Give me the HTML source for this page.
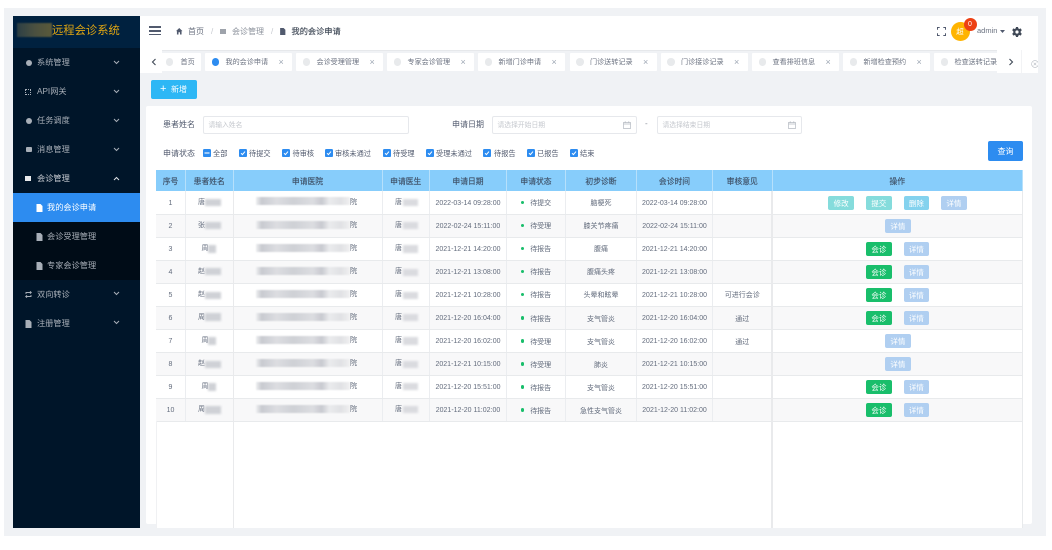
<!DOCTYPE html>
<html lang="zh-CN">
<head>
<meta charset="utf-8">
<title>远程会诊系统</title>
<style>
*{box-sizing:border-box}
html,body{margin:0;padding:0;width:1052px;height:550px;overflow:hidden;background:#fff}
body{font-family:"Liberation Sans","Noto Sans CJK SC",sans-serif;color:#515a6e;position:relative}
#wrap{position:absolute;left:0;top:0;width:1052px;height:550px;filter:blur(.35px);overflow:hidden}
.a{position:absolute;white-space:nowrap}
svg{position:absolute;display:block}
.mi{position:absolute;left:37px;font-size:8.2px;line-height:12px;color:#a8afb8;white-space:nowrap;margin-top:.7px}
.sub{left:47px}
.tab{position:absolute;top:3.3px;height:17.7px;background:#fff;border-radius:1px;width:87px}
.tab i{position:absolute;left:6.5px;top:5px;width:7.5px;height:7.5px;border-radius:50%;background:#e8eaec}
.tab span{position:absolute;left:20.5px;top:3px;font-size:7.1px;line-height:12px;color:#6b7280;white-space:nowrap}
.tab b{position:absolute;left:73.5px;top:3px;font-weight:400;font-size:9px;line-height:12px;color:#9ea7b4}
.ipt{position:absolute;top:115.5px;height:18.5px;border:1px solid #e6e8ec;border-radius:2px;background:#fff;font-size:6.8px;line-height:17px;color:#c5c8ce;padding-left:4.5px;white-space:nowrap}
.lb{position:absolute;font-size:8px;line-height:12px;color:#515a6e;white-space:nowrap}
.cb{position:absolute;top:149px;width:8px;height:8px;border-radius:1.3px;background:#2d8cf0}
.cb svg{left:0;top:0}
.cl{position:absolute;top:147.6px;font-size:7.2px;line-height:12px;color:#515a6e;white-space:nowrap}
table{position:absolute;left:156px;top:170px;width:867px;table-layout:fixed;border-collapse:collapse;font-size:7px;color:#626b7c}
th{height:21px;background:#87cdfb;font-size:7.8px;font-weight:400;color:#3f5167;text-align:center;padding:1px 0 0;border-right:1px solid #b6e0fb;-webkit-text-stroke:.15px #3f5167}
td{height:23.05px;padding:1.5px 0 0;text-align:center;border-right:1px solid #ebedf0;border-bottom:1px solid #e8eaec;background:#fff;white-space:nowrap;overflow:hidden}
tr.e td{background:#f8f8f9}
.dot{display:inline-block;width:3.4px;height:3.4px;border-radius:50%;background:#19be6b;margin-right:6px;vertical-align:1px}
.btn{position:absolute;height:14px;width:25.7px;border-radius:2px;color:#fff;font-size:7.5px;line-height:15.5px;text-align:center}
.c1{background:#85dcdc}.c2{background:#84d2ee}.c3{background:#b0cff1}.c4{background:#19be6b}
.bl{position:absolute;height:7px;filter:blur(1px);background:#cfd1d6}
.h{position:absolute;left:256px;width:94px;height:8px;filter:blur(.8px);background:linear-gradient(90deg,#eeeff1 0,#c8cad0 6%,#dcdde1 22%,#ced0d5 40%,#dcdde1 60%,#c8cad0 70%,#eaebed 78%,#e0e1e4 90%,#f0f0f1 100%)}
.t{position:absolute;font-size:7px;line-height:10px;color:#626b7c;margin-top:1.3px}
</style>
</head>
<body>
<div id="wrap">
<div class="a" style="left:4px;top:7.5px;width:1042px;height:528.5px;background:#f0f2f5"></div>

<!-- sidebar -->
<div class="a" style="left:13px;top:16px;width:126.5px;height:512px;background:#001529"></div>
<div class="a" style="left:13px;top:16px;width:126.5px;height:32px;background:#00213f"></div>
<div class="a" style="left:17px;top:23px;width:35px;height:14px;background:linear-gradient(90deg,#2c3f45,#4a5040 50%,#5a5a3a);filter:blur(.8px)"></div>
<div class="a" style="left:52px;top:23.7px;font-size:11.3px;line-height:15px;color:#e0a612">远程会诊系统</div>

<div class="a" style="left:13px;top:193px;width:126.5px;height:28.5px;background:#2d8cf0"></div>
<div class="a" style="left:13px;top:221.5px;width:126.5px;height:58px;background:#000c17"></div>

<div class="a" style="left:25.5px;top:59.5px;width:6px;height:6px;border-radius:50%;background:#a8afb8"></div>
<div class="mi" style="top:56px">系统管理</div>
<div class="a" style="left:25px;top:88.5px;width:6px;height:6px;border:1px dotted #a8afb8"></div>
<div class="mi" style="top:85px">API网关</div>
<div class="a" style="left:25.5px;top:117.5px;width:6px;height:6px;border-radius:50%;background:#a8afb8"></div>
<div class="mi" style="top:114px">任务调度</div>
<div class="a" style="left:25.5px;top:147px;width:6px;height:5px;border-radius:1px;background:#a8afb8"></div>
<div class="mi" style="top:143px">消息管理</div>
<div class="a" style="left:25px;top:175.5px;width:6px;height:5.5px;background:#e8eaec"></div>
<div class="mi" style="top:172px;color:#c8ccd2">会诊管理</div>

<svg style="left:36px;top:203.5px" width="7" height="8" viewBox="0 0 7 8"><path d="M.5 0H4.5L6.5 2V8H.5Z" fill="#fff"/></svg>
<div class="mi sub" style="top:201px;color:#fff">我的会诊申请</div>
<svg style="left:36px;top:232.5px" width="7" height="8" viewBox="0 0 7 8"><path d="M.5 0H4.5L6.5 2V8H.5Z" fill="#a8afb8"/></svg>
<div class="mi sub" style="top:230px">会诊受理管理</div>
<svg style="left:36px;top:261.5px" width="7" height="8" viewBox="0 0 7 8"><path d="M.5 0H4.5L6.5 2V8H.5Z" fill="#a8afb8"/></svg>
<div class="mi sub" style="top:259px">专家会诊管理</div>

<svg style="left:25px;top:291px" width="7" height="7" viewBox="0 0 7 7"><path d="M1 3V1.5H6M5 .3 6.3 1.5 5 2.7M6 4V5.5H1M2 4.3.7 5.5 2 6.7" fill="none" stroke="#a8afb8" stroke-width=".9"/></svg>
<div class="mi" style="top:288px">双向转诊</div>
<svg style="left:25px;top:319.5px" width="7" height="8" viewBox="0 0 7 8"><path d="M.5 0H4.5L6.5 2V8H.5Z" fill="#a8afb8"/></svg>
<div class="mi" style="top:317px">注册管理</div>

<svg style="left:113px;top:59.5px" width="7" height="5" viewBox="0 0 7 5"><path d="M1 1 3.5 3.5 6 1" fill="none" stroke="#a8afb8"/></svg>
<svg style="left:113px;top:88.5px" width="7" height="5" viewBox="0 0 7 5"><path d="M1 1 3.5 3.5 6 1" fill="none" stroke="#a8afb8"/></svg>
<svg style="left:113px;top:117.5px" width="7" height="5" viewBox="0 0 7 5"><path d="M1 1 3.5 3.5 6 1" fill="none" stroke="#a8afb8"/></svg>
<svg style="left:113px;top:146.5px" width="7" height="5" viewBox="0 0 7 5"><path d="M1 1 3.5 3.5 6 1" fill="none" stroke="#a8afb8"/></svg>
<svg style="left:113px;top:176px" width="7" height="5" viewBox="0 0 7 5"><path d="M1 4 3.5 1.5 6 4" fill="none" stroke="#dfe2e6"/></svg>
<svg style="left:113px;top:291px" width="7" height="5" viewBox="0 0 7 5"><path d="M1 1 3.5 3.5 6 1" fill="none" stroke="#a8afb8"/></svg>
<svg style="left:113px;top:320px" width="7" height="5" viewBox="0 0 7 5"><path d="M1 1 3.5 3.5 6 1" fill="none" stroke="#a8afb8"/></svg>

<!-- header -->
<div class="a" style="left:139.5px;top:16px;width:898.5px;height:34px;background:#fff"></div>
<div class="a" style="left:148.5px;top:26px;width:12px;height:1.5px;background:#515a6e"></div>
<div class="a" style="left:148.5px;top:30px;width:12px;height:1.5px;background:#515a6e"></div>
<div class="a" style="left:148.5px;top:33.5px;width:12px;height:1.5px;background:#515a6e"></div>
<svg style="left:176px;top:28px" width="6.5" height="6.5" viewBox="0 0 7 7"><path d="M3.5 0 7 3.3H6V7H4.3V4.6H2.7V7H1V3.3H0Z" fill="#515a6e"/></svg>
<div class="a" style="left:188px;top:25.5px;font-size:8px;line-height:12px;color:#6b7280">首页</div>
<div class="a" style="left:211px;top:25.5px;font-size:8px;line-height:12px;color:#c5c8ce">/</div>
<div class="a" style="left:219.5px;top:28.5px;width:6px;height:5.5px;background:#9ea3ab"></div>
<div class="a" style="left:232px;top:25.5px;font-size:8px;line-height:12px;color:#8b919b">会诊管理</div>
<div class="a" style="left:271px;top:25.5px;font-size:8px;line-height:12px;color:#c5c8ce">/</div>
<svg style="left:280px;top:27.5px" width="5.5" height="7" viewBox="0 0 6 8"><path d="M0 0H4L6 2V8H0Z" fill="#515a6e"/></svg>
<div class="a" style="left:291.5px;top:25.5px;font-size:8.2px;line-height:12px;color:#3f4856;-webkit-text-stroke:.15px #3f4856">我的会诊申请</div>

<svg style="left:937px;top:27px" width="9" height="9" viewBox="0 0 9 9"><path d="M.5 2.7V.5H2.7M6.3.5H8.5V2.7M8.5 6.3V8.5H6.3M2.7 8.5H.5V6.3" fill="none" stroke="#515a6e"/></svg>
<div class="a" style="left:950.5px;top:22px;width:19px;height:19px;border-radius:50%;background:#ffb400;color:#fff;font-size:7.5px;line-height:19px;text-align:center">超</div>
<div class="a" style="left:963.5px;top:18px;width:13px;height:13px;border-radius:50%;background:#ed4014;color:#fff;font-size:7px;line-height:13px;text-align:center">0</div>
<div class="a" style="left:977px;top:25px;font-size:7.5px;line-height:12px;color:#6b7280">admin</div>
<svg style="left:999.5px;top:29.5px" width="5" height="3.5" viewBox="0 0 5 3.5"><path d="M0 0H5L2.5 3Z" fill="#515a6e"/></svg>
<svg style="left:1012px;top:26.5px" width="10" height="10" viewBox="0 0 10 10"><path fill-rule="evenodd" d="M4 0H6L6.3 1.4 7.4 2 8.7 1.4 9.8 3.2 8.7 4.2V5.8L9.8 6.8 8.7 8.6 7.4 8 6.3 8.6 6 10H4L3.7 8.6 2.6 8 1.3 8.6.2 6.8 1.3 5.8V4.2L.2 3.2 1.3 1.4 2.6 2 3.7 1.4ZM5 3.4A1.6 1.6 0 1 0 5 6.6 1.6 1.6 0 1 0 5 3.4Z" fill="#3f4856"/></svg>

<!-- tabs bar -->
<div class="a" style="left:139.5px;top:50px;width:898.5px;height:23px;background:#f0f2f5"></div>
<div class="a" style="left:139.5px;top:50px;width:898.5px;height:1.2px;background:#e6e8eb"></div>
<div class="a" style="left:139.5px;top:50px;width:857.5px;height:23px;overflow:hidden">
  <div class="tab" style="left:16.5px;width:45px"><i style="left:9.5px"></i><span style="left:24.5px">首页</span></div>
  <div class="tab" style="left:65.5px"><i style="background:#2d8cf0"></i><span>我的会诊申请</span><b>×</b></div>
  <div class="tab" style="left:156.5px"><i></i><span>会诊受理管理</span><b>×</b></div>
  <div class="tab" style="left:247.5px"><i></i><span>专家会诊管理</span><b>×</b></div>
  <div class="tab" style="left:338.5px"><i></i><span>新增门诊申请</span><b>×</b></div>
  <div class="tab" style="left:430px"><i></i><span>门诊送转记录</span><b>×</b></div>
  <div class="tab" style="left:521px"><i></i><span>门诊接诊记录</span><b>×</b></div>
  <div class="tab" style="left:612.5px"><i></i><span>查看排班信息</span><b>×</b></div>
  <div class="tab" style="left:703.5px"><i></i><span>新增检查预约</span><b>×</b></div>
  <div class="tab" style="left:794.5px"><i></i><span>检查送转记录</span><b>×</b></div>
</div>
<div class="a" style="left:139.5px;top:50px;width:22.5px;height:23px;background:#fff"></div>
<svg style="left:151px;top:58px" width="6" height="8" viewBox="0 0 6 8"><path d="M4.5 1 1.5 4 4.5 7" fill="none" stroke="#3f4856" stroke-width="1.1"/></svg>
<div class="a" style="left:997px;top:50px;width:41px;height:23px;background:#fff"></div>
<div class="a" style="left:1020.5px;top:50px;width:1px;height:23px;background:#f2f3f5"></div>
<svg style="left:1008px;top:58px" width="6" height="8" viewBox="0 0 6 8"><path d="M1.5 1 4.5 4 1.5 7" fill="none" stroke="#3f4856" stroke-width="1.1"/></svg>
<svg style="left:1031px;top:60px" width="7" height="8" viewBox="0 0 7 8"><circle cx="4" cy="4" r="3.4" fill="none" stroke="#b5bac2" stroke-width=".6"/><path d="M2.7 2.7 5.3 5.3M5.3 2.7 2.7 5.3" stroke="#b5bac2" stroke-width=".6"/></svg>

<!-- add button -->
<div class="a" style="left:151px;top:79.5px;width:46px;height:19.5px;border-radius:2px;background:#2db7f5;color:#fff;font-size:8px;line-height:20.5px"><span style="position:absolute;left:9px;font-size:11px;top:0;line-height:19px">+</span><span style="position:absolute;left:20px">新增</span></div>

<!-- card -->
<div class="a" style="left:146px;top:106px;width:886px;height:418px;background:#fff;border-radius:2px"></div>
<div class="lb" style="left:163px;top:119px">患者姓名</div>
<div class="ipt" style="left:203px;width:206px">请输入姓名</div>
<div class="lb" style="left:452px;top:119px">申请日期</div>
<div class="ipt" style="left:492px;width:144.5px">请选择开始日期</div>
<svg style="left:623px;top:120.5px" width="8" height="8" viewBox="0 0 8 8"><path d="M.5 1.5H7.5V7.5H.5ZM.5 3H7.5M2.2.3V2M5.8.3V2" fill="none" stroke="#b5bac2" stroke-width=".7"/></svg>
<div class="a" style="left:645px;top:118px;font-size:8px;line-height:12px;color:#8b919b">-</div>
<div class="ipt" style="left:657px;width:144.5px">请选择结束日期</div>
<svg style="left:788px;top:120.5px" width="8" height="8" viewBox="0 0 8 8"><path d="M.5 1.5H7.5V7.5H.5ZM.5 3H7.5M2.2.3V2M5.8.3V2" fill="none" stroke="#b5bac2" stroke-width=".7"/></svg>

<div class="lb" style="left:163px;top:147.5px">申请状态</div>
<div class="cb" style="left:203px"><svg width="8" height="8" viewBox="0 0 8 8"><path d="M1.5 4H6.5" stroke="#fff" stroke-width="1.1"/></svg></div><div class="cl" style="left:213px">全部</div>
<div class="cb" style="left:239px"><svg width="8" height="8" viewBox="0 0 8 8"><path d="M2 4.2 3.4 5.6 6 2.6" fill="none" stroke="#fff"/></svg></div><div class="cl" style="left:249px">待提交</div>
<div class="cb" style="left:282px"><svg width="8" height="8" viewBox="0 0 8 8"><path d="M2 4.2 3.4 5.6 6 2.6" fill="none" stroke="#fff"/></svg></div><div class="cl" style="left:292.5px">待审核</div>
<div class="cb" style="left:325px"><svg width="8" height="8" viewBox="0 0 8 8"><path d="M2 4.2 3.4 5.6 6 2.6" fill="none" stroke="#fff"/></svg></div><div class="cl" style="left:335px">审核未通过</div>
<div class="cb" style="left:383px"><svg width="8" height="8" viewBox="0 0 8 8"><path d="M2 4.2 3.4 5.6 6 2.6" fill="none" stroke="#fff"/></svg></div><div class="cl" style="left:393px">待受理</div>
<div class="cb" style="left:426px"><svg width="8" height="8" viewBox="0 0 8 8"><path d="M2 4.2 3.4 5.6 6 2.6" fill="none" stroke="#fff"/></svg></div><div class="cl" style="left:436px">受理未通过</div>
<div class="cb" style="left:483px"><svg width="8" height="8" viewBox="0 0 8 8"><path d="M2 4.2 3.4 5.6 6 2.6" fill="none" stroke="#fff"/></svg></div><div class="cl" style="left:494px">待报告</div>
<div class="cb" style="left:527px"><svg width="8" height="8" viewBox="0 0 8 8"><path d="M2 4.2 3.4 5.6 6 2.6" fill="none" stroke="#fff"/></svg></div><div class="cl" style="left:537px">已报告</div>
<div class="cb" style="left:570px"><svg width="8" height="8" viewBox="0 0 8 8"><path d="M2 4.2 3.4 5.6 6 2.6" fill="none" stroke="#fff"/></svg></div><div class="cl" style="left:580px">结束</div>

<div class="a" style="left:988px;top:141px;width:35px;height:19.5px;border-radius:2px;background:#2d8cf0;color:#fff;font-size:8px;line-height:22px;text-align:center">查询</div>

<!-- table -->
<div class="a" style="left:156px;top:170px;width:867px;height:358px;background:#fff"></div>
<table>
<colgroup><col style="width:29.5px"><col style="width:47.5px"><col style="width:149px"><col style="width:47.5px"><col style="width:77px"><col style="width:59px"><col style="width:71px"><col style="width:76px"><col style="width:59.5px"><col style="width:250.5px"></colgroup>
<tr><th>序号</th><th>患者姓名</th><th>申请医院</th><th>申请医生</th><th>申请日期</th><th>申请状态</th><th>初步诊断</th><th>会诊时间</th><th>审核意见</th><th>操作</th></tr>
<tr><td>1</td><td></td><td></td><td></td><td>2022-03-14 09:28:00</td><td><i class="dot"></i>待提交</td><td>脑梗死</td><td>2022-03-14 09:28:00</td><td></td><td></td></tr>
<tr class="e"><td>2</td><td></td><td></td><td></td><td>2022-02-24 15:11:00</td><td><i class="dot"></i>待受理</td><td>膝关节疼痛</td><td>2022-02-24 15:11:00</td><td></td><td></td></tr>
<tr><td>3</td><td></td><td></td><td></td><td>2021-12-21 14:20:00</td><td><i class="dot"></i>待报告</td><td>腹痛</td><td>2021-12-21 14:20:00</td><td></td><td></td></tr>
<tr class="e"><td>4</td><td></td><td></td><td></td><td>2021-12-21 13:08:00</td><td><i class="dot"></i>待报告</td><td>腹痛头疼</td><td>2021-12-21 13:08:00</td><td></td><td></td></tr>
<tr><td>5</td><td></td><td></td><td></td><td>2021-12-21 10:28:00</td><td><i class="dot"></i>待报告</td><td>头晕和眩晕</td><td>2021-12-21 10:28:00</td><td>可进行会诊</td><td></td></tr>
<tr class="e"><td>6</td><td></td><td></td><td></td><td>2021-12-20 16:04:00</td><td><i class="dot"></i>待报告</td><td>支气管炎</td><td>2021-12-20 16:04:00</td><td>通过</td><td></td></tr>
<tr><td>7</td><td></td><td></td><td></td><td>2021-12-20 16:02:00</td><td><i class="dot"></i>待受理</td><td>支气管炎</td><td>2021-12-20 16:02:00</td><td>通过</td><td></td></tr>
<tr class="e"><td>8</td><td></td><td></td><td></td><td>2021-12-21 10:15:00</td><td><i class="dot"></i>待受理</td><td>肺炎</td><td>2021-12-21 10:15:00</td><td></td><td></td></tr>
<tr><td>9</td><td></td><td></td><td></td><td>2021-12-20 15:51:00</td><td><i class="dot"></i>待报告</td><td>支气管炎</td><td>2021-12-20 15:51:00</td><td></td><td></td></tr>
<tr class="e"><td>10</td><td></td><td></td><td></td><td>2021-12-20 11:02:00</td><td><i class="dot"></i>待报告</td><td>急性支气管炎</td><td>2021-12-20 11:02:00</td><td></td><td></td></tr>
</table>

<!-- fixed column separators -->
<div class="a" style="left:232.5px;top:191px;width:1.5px;height:337px;background:#e9eaec"></div>
<div class="a" style="left:771px;top:191px;width:2px;height:337px;background:#e9eaec"></div>
<div class="a" style="left:1022px;top:191px;width:1px;height:337px;background:#e8eaec"></div>
<div class="a" style="left:156px;top:421px;width:1px;height:107px;background:#f0f1f3"></div>

<!-- redacted names -->
<div class="t" style="left:198px;top:197px">唐</div><div class="bl" style="left:205px;top:199px;width:16px"></div>
<div class="t" style="left:198px;top:220px">张</div><div class="bl" style="left:205px;top:222px;width:16px"></div>
<div class="t" style="left:201.5px;top:243px">周</div><div class="bl" style="left:208px;top:245px;width:8px;height:8px"></div>
<div class="t" style="left:198px;top:266px">赵</div><div class="bl" style="left:205px;top:268px;width:16px"></div>
<div class="t" style="left:198px;top:289px">赵</div><div class="bl" style="left:205px;top:292px;width:16px"></div>
<div class="t" style="left:198px;top:312px">周</div><div class="bl" style="left:205px;top:313px;width:16px;height:8px"></div>
<div class="t" style="left:201.5px;top:335px">周</div><div class="bl" style="left:208px;top:337px;width:8px;height:8px"></div>
<div class="t" style="left:198px;top:358px">赵</div><div class="bl" style="left:205px;top:361px;width:16px"></div>
<div class="t" style="left:201.5px;top:381px">周</div><div class="bl" style="left:208px;top:383px;width:8px;height:8px"></div>
<div class="t" style="left:198px;top:404px">周</div><div class="bl" style="left:205px;top:406px;width:16px;height:8px"></div>

<!-- redacted hospitals -->
<div class="h" style="top:197px"></div><div class="t" style="left:350px;top:197px">院</div>
<div class="h" style="top:220.5px"></div><div class="t" style="left:350px;top:220px">院</div>
<div class="h" style="top:243.5px"></div><div class="t" style="left:350px;top:243px">院</div>
<div class="h" style="top:266.5px"></div><div class="t" style="left:350px;top:266px">院</div>
<div class="h" style="top:290px"></div><div class="t" style="left:350px;top:289px">院</div>
<div class="h" style="top:313px"></div><div class="t" style="left:350px;top:312px">院</div>
<div class="h" style="top:335.5px"></div><div class="t" style="left:350px;top:335px">院</div>
<div class="h" style="top:358.5px"></div><div class="t" style="left:350px;top:358px">院</div>
<div class="h" style="top:381.5px"></div><div class="t" style="left:350px;top:381px">院</div>
<div class="h" style="top:404.5px"></div><div class="t" style="left:350px;top:404px">院</div>

<!-- redacted doctors -->
<div class="t" style="left:395px;top:197px">唐</div><div class="bl" style="left:403px;top:199px;width:15px;background:#dadbdf"></div>
<div class="t" style="left:395px;top:220px">唐</div><div class="bl" style="left:403px;top:222px;width:15px;background:#dadbdf"></div>
<div class="t" style="left:395px;top:243px">唐</div><div class="bl" style="left:403px;top:245px;width:15px;height:8px;background:#dadbdf"></div>
<div class="t" style="left:395px;top:266px">唐</div><div class="bl" style="left:403px;top:269px;width:15px;background:#dadbdf"></div>
<div class="t" style="left:395px;top:289px">唐</div><div class="bl" style="left:403px;top:292px;width:15px;background:#dadbdf"></div>
<div class="t" style="left:395px;top:312px">唐</div><div class="bl" style="left:403px;top:314px;width:15px;background:#dadbdf"></div>
<div class="t" style="left:395px;top:335px">唐</div><div class="bl" style="left:403px;top:337px;width:15px;height:8px;background:#dadbdf"></div>
<div class="t" style="left:395px;top:358px">唐</div><div class="bl" style="left:403px;top:361px;width:15px;background:#dadbdf"></div>
<div class="t" style="left:395px;top:381px">唐</div><div class="bl" style="left:403px;top:383px;width:15px;background:#dadbdf"></div>
<div class="t" style="left:395px;top:404px">唐</div><div class="bl" style="left:403px;top:406px;width:15px;background:#dadbdf"></div>

<!-- action buttons -->
<div class="btn c1" style="left:828.3px;top:196px">修改</div>
<div class="btn c1" style="left:866px;top:196px">提交</div>
<div class="btn c2" style="left:903.5px;top:196px">删除</div>
<div class="btn c3" style="left:941px;top:196px">详情</div>
<div class="btn c3" style="left:885px;top:219px">详情</div>
<div class="btn c4" style="left:866px;top:242px">会诊</div><div class="btn c3" style="left:903.5px;top:242px">详情</div>
<div class="btn c4" style="left:866px;top:265px">会诊</div><div class="btn c3" style="left:903.5px;top:265px">详情</div>
<div class="btn c4" style="left:866px;top:288px">会诊</div><div class="btn c3" style="left:903.5px;top:288px">详情</div>
<div class="btn c4" style="left:866px;top:311px">会诊</div><div class="btn c3" style="left:903.5px;top:311px">详情</div>
<div class="btn c3" style="left:885px;top:334px">详情</div>
<div class="btn c3" style="left:885px;top:357px">详情</div>
<div class="btn c4" style="left:866px;top:380px">会诊</div><div class="btn c3" style="left:903.5px;top:380px">详情</div>
<div class="btn c4" style="left:866px;top:403px">会诊</div><div class="btn c3" style="left:903.5px;top:403px">详情</div>
</div>
</body>
</html>
